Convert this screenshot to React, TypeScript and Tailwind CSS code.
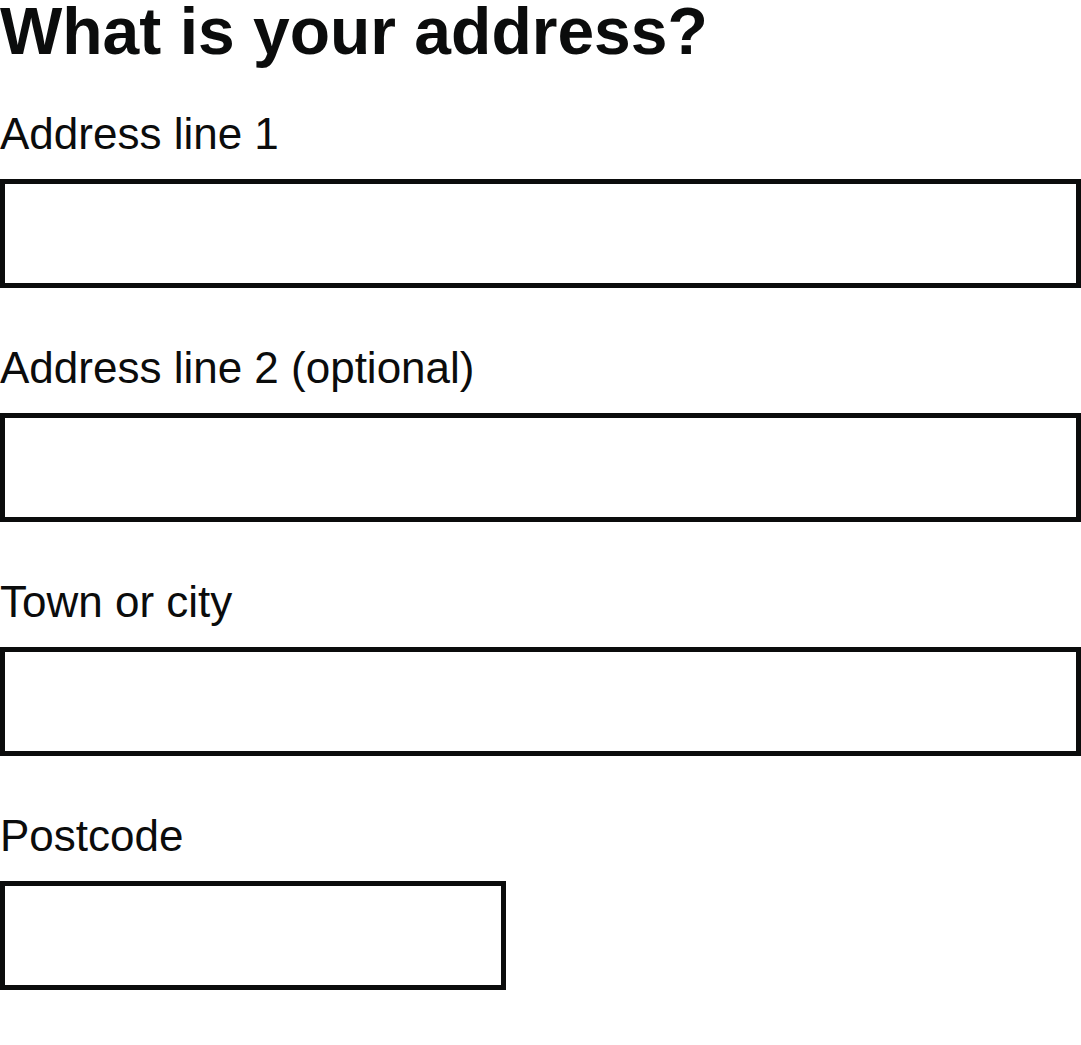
const fields = [
  { label: "Address line 1", full: true },
  { label: "Address line 2 (optional)", full: true },
  { label: "Town or city", full: true },
  { label: "Postcode", full: false },
];

export default function App() {
  return (
    <div className="bg-white text-[#0b0c0c] font-['Liberation_Sans',Arial,sans-serif] min-h-screen">
      <h1 className="text-[66px] leading-[62px] font-bold mb-[45px]">
        What is your address?
      </h1>
      <div className="flex flex-col gap-[53px]">
        {fields.map((f) => (
          <div key={f.label} className="flex flex-col">
            <label className="block text-[44px] leading-[53px] mb-[19px]">
              {f.label}
            </label>
            <input
              type="text"
              className={`h-[109px] border-[5px] border-[#0b0c0c] bg-white outline-none ${
                f.full ? "w-full" : "w-[506px]"
              }`}
            />
          </div>
        ))}
      </div>
    </div>
  );
}
